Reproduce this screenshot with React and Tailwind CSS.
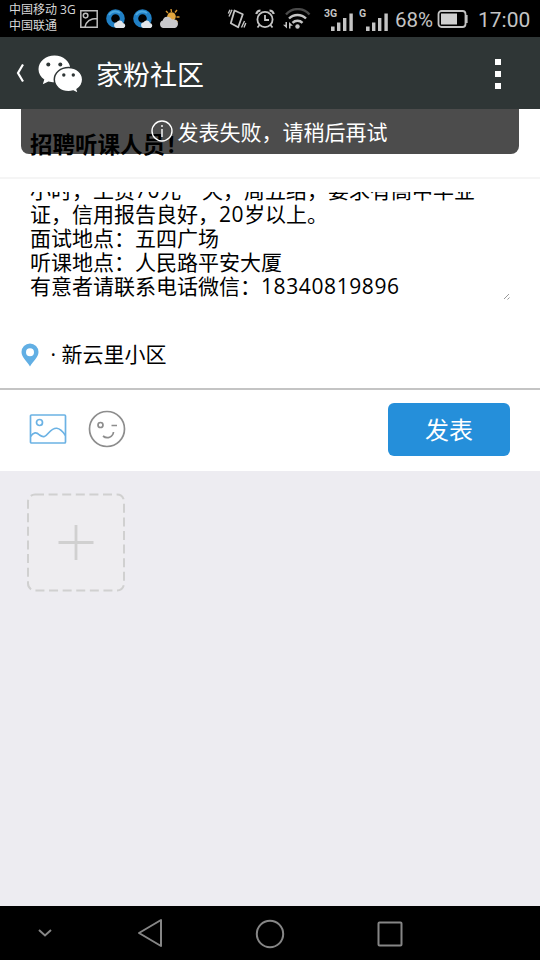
const POST_LINES = ['证，信用报告良好，', '面试地点：五四广场', '听课地点：人民路平安大厦', '有意者请联系电话微信：'];

const BrowserIcon = () => (
  <svg className="w-[20px] h-[20px] shrink-0" viewBox="0 0 20 20" fill="none">
    <circle cx="9.5" cy="9.5" r="6.8" stroke="#2080c6" strokeWidth="5" />
    <path d="M3 6a7.5 7.5 0 0 1 11-2" stroke="#4ba7df" strokeWidth="2" />
    <path d="M10 19a3 3 0 0 1 .6-5.8 3.6 3.6 0 0 1 6.4.8 2.6 2.6 0 0 1 .6 5z" fill="#e2e6ea" />
  </svg>
);

const SignalIcon = ({ label }) => (
  <svg className="-mt-[6px] w-[30px] h-[27px] shrink-0" viewBox="0 0 30 27" fill="#c4c4c4">
    <text x="0" y="12" fontSize="10.500" fontWeight="700" className="font-['Roboto',sans-serif]">{label}</text>
    <path d="M7 21.500h3.600V26H7zM13 17.500h3.400V26H13zM19 13h3.400v13H19zM25.400 8.500h3.400V26h-3.400z" />
  </svg>
);

const StatusBar = () => (
  <header className="flex h-[37px] shrink-0 items-center bg-black pl-[9px] text-[#c4c4c4]">
    <div className="-mt-[1px] w-[71px] shrink-0 whitespace-nowrap text-[12px] leading-[16px] text-[#d8d8d8]">
      <p>中国移动 3G</p>
      <p>中国联通</p>
    </div>
    <svg className="w-[18px] h-[18px] shrink-0" viewBox="0 0 18 18" fill="none" stroke="#bdbdbd" strokeWidth="1.5">
      <path d="M.8.8h16.400v16.400H.8zM5 17c1-5 5-8.500 12-8.500" />
      <circle cx="5.600" cy="5.600" r="2.300" />
    </svg>
    <div className="ml-[8px] flex gap-[7px]">
      <BrowserIcon />
      <BrowserIcon />
    </div>
    <svg className="ml-[6px] w-[22px] h-[20px] shrink-0" viewBox="0 0 22 20">
      <path d="M12 0l.5 3M18 1l-2 2.500M7 2l2 2M20.500 8h-3M18.500 13l-2-2" stroke="#d6962e" strokeWidth="1.400" />
      <circle cx="12.500" cy="7.500" r="4.300" fill="#e2a63e" />
      <path d="M4 19a3.900 3.900 0 0 1-.3-7.500 5 5 0 0 1 9.300-1 4.500 4.500 0 0 1 3 8.500z" fill="#c9c9cc" />
    </svg>
    <svg className="ml-[46px] w-[20px] h-[20px] shrink-0" viewBox="0 0 20 20" fill="none" stroke="#c4c4c4" strokeWidth="1.800">
      <path d="M7.500 1.500l8.300 3.800-4.600 13-7.400-4z" strokeLinejoin="round" />
      <path d="M5 .8L2 7.500M3 .8L1.300 4.500M14.500 18.500l3-6.500M17 18.500l1.800-4.500" strokeWidth="1.400" />
    </svg>
    <svg className="ml-[8px] w-[20px] h-[20px] shrink-0" viewBox="0 0 20 20" fill="none" stroke="#c4c4c4" strokeWidth="1.800">
      <circle cx="10" cy="10.500" r="7.600" />
      <path d="M10 6v5h4M4.500 16l-2 2.500M15.500 16l2 2.500" />
      <path d="M1.200 5C1.800 3 3.500 1.500 5.500 1.500M18.800 5c-.6-2-2.300-3.500-4.300-3.500" strokeWidth="2.200" />
    </svg>
    <svg className="ml-[8px] w-[28px] h-[22px] shrink-0" viewBox="0 0 28 22" fill="none" strokeWidth="2.400">
      <path d="M3 6.500a15.500 15.500 0 0 1 23.500 0" stroke="#4a4a4a" />
      <path d="M6 10.500a12 12 0 0 1 17 0M9.500 14.800a7 7 0 0 1 10 0" stroke="#c4c4c4" />
      <circle cx="14.500" cy="18.500" r="2.200" fill="#c4c4c4" />
      <g fill="#c4c4c4">
        <path d="M2.500 14h1.500v6.500L0 16.800h2.500zM6 14v6.500h1.500v-2.800H10z" />
      </g>
    </svg>
    <div className="ml-[13px] flex gap-[5px] pt-[5px]">
      <SignalIcon label="3G" />
      <SignalIcon label="G" />
    </div>
    <span className="ml-[6px] w-[42px] shrink-0 whitespace-nowrap font-['Roboto',sans-serif] text-[20.500px] leading-6 pt-[2px]">68%</span>
    <svg className="w-[32px] h-[20px] shrink-0" viewBox="0 0 32 20">
      <rect x="1.500" y="2" width="27" height="16" rx="3" fill="none" stroke="#c4c4c4" strokeWidth="1.800" />
      <rect x="4" y="4.500" width="16" height="11" fill="#d0d0d0" />
      <path d="M29 6h1.600v8H29z" fill="#c4c4c4" />
    </svg>
    <span className="ml-[9px] whitespace-nowrap font-['Roboto',sans-serif] text-[21px] leading-6 pt-[2px]">17:00</span>
  </header>
);

const TitleBar = () => (
  <div className="flex h-[72px] shrink-0 items-center bg-[#2f3636] pl-[16px] pr-[39px] text-white">
    <svg className="w-[8px] h-[20px] shrink-0" viewBox="0 0 8 20" fill="none" stroke="white" strokeWidth="2.200">
      <path d="M7 1.500L2 10l5 8.500" />
    </svg>
    <svg className="ml-[13px] mt-[2px] w-[46px] h-[38px] shrink-0" viewBox="0 0 46 38">
      <path fill="white" d="M17.500.5C8.800.5 1.500 6.500 1.500 14.200c0 4.300 2.200 7.800 5.800 10.300L5.800 29.200l5.600-2.800c2 .5 3.800.8 6.100.8 8.600 0 15.800-6 15.800-13.200S26.200.5 17.500.5z" />
      <path fill="white" stroke="#2f3636" strokeWidth="1.500" d="M31.500 12.500c-8 0-14.200 5.300-14.200 12.100s6.200 12.100 14.200 12.100c1.700 0 3.300-.3 4.800-.7l5.200 2.600-1.400-4.200c3.400-2.200 5.600-5.700 5.600-9.800 0-6.800-6.200-12.100-14.200-12.100z" />
      <g fill="#2f3636">
        <circle cx="11.300" cy="9.500" r="2" />
        <circle cx="23.300" cy="9.500" r="2" />
        <circle cx="26.800" cy="20" r="1.700" />
        <circle cx="36.300" cy="20" r="1.700" />
      </g>
    </svg>
    <h1 className="ml-[13px] mt-[4px] grow text-[27px] leading-9">家粉社区</h1>
    <div className="mt-[1px] flex flex-col gap-[6px]">
      <i className="size-[6px] bg-white" />
      <i className="size-[6px] bg-white" />
      <i className="size-[6px] bg-white" />
    </div>
  </div>
);

const Toast = () => (
  <div className="absolute inset-x-[21px] top-0 flex h-[45px] items-center justify-center gap-[5px] rounded-b-[8px] bg-black/70 pr-[2px] text-[21px] leading-6 text-white">
    <svg className="-mt-[2px] size-[22px]" viewBox="0 0 22 22" fill="none" stroke="white" strokeWidth="1.400">
      <circle cx="11" cy="11" r="10" />
      <path d="M11 9v8M11 5v2" />
    </svg>
    <span>发表失败，请稍后再试</span>
  </div>
);

const PostForm = () => (
  <div className="h-[279px] shrink-0">
    <div className="flex h-[70px] items-center border-b-2 border-[#f5f5f5] pl-[30px] pt-[3px] text-[22.500px] font-bold">
      招聘听课人员<span className="ml-[3px]">!</span>
    </div>
    <div className="ml-[30px] mr-[29px] mt-[13px] flex h-[110px] items-end overflow-hidden text-[21px] leading-6">
      <div className="grow whitespace-nowrap pb-[4px]">
        <p>小时，工资<span className="tracking-[.55px]">70</span>元一天，周五结，要求有高中毕业</p>
        <p>{POST_LINES[0]}<span className="tracking-[.55px]">20</span>岁以上。</p>
        <p>{POST_LINES[1]}</p>
        <p>{POST_LINES[2]}</p>
        <p>{POST_LINES[3]}<span className="tracking-[.6px]">18340819896</span></p>
      </div>
      <svg className="mb-[2px] mr-[1px] size-[7px] shrink-0" viewBox="0 0 7 7" stroke="#999" strokeWidth="1">
        <path d="M1 6l5-5M4.500 6.500l2-2" />
      </svg>
    </div>
    <div className="mt-[40px] flex h-[26px] items-center pl-[20.500px] text-[21px]">
      <svg className="w-[18px] h-[24px] shrink-0" viewBox="0 0 18 24">
        <path fill="#62afe4" fillRule="evenodd" d="M9 .5a8.500 8.500 0 0 0-8.500 8.600C.5 14.500 6 18.500 9 23.500c3-5 8.500-9 8.500-14.400A8.500 8.500 0 0 0 9 .5zm0 4.800a4 4 0 1 1 0 8 4 4 0 0 1 0-8z" />
      </svg>
      <span className="ml-[12px]">· 新云里小区</span>
    </div>
  </div>
);

const Toolbar = () => (
  <div className="flex h-[83px] shrink-0 items-center border-t-2 border-[#c4c4c4] pb-[2px] pl-[29px] pr-[30px]">
    <svg className="-mt-[1px] w-[38px] h-[30px]" viewBox="0 0 38 30" fill="none" stroke="#6bb2e4" strokeWidth="1.700">
      <rect x="1.500" y="1" width="35" height="28" rx="1" />
      <circle cx="10.500" cy="8.500" r="3" />
      <path d="M1.500 22.500c3-4.500 6-4.500 9-1.500 4 3 6 1.500 9-2 6-6.500 10.500-7 17 2.500" />
    </svg>
    <svg className="ml-[21px] -mt-[1px] size-[38px]" viewBox="0 0 38 38" fill="none" stroke="#8d8d8d" strokeWidth="1.700">
      <circle cx="19" cy="19" r="17.500" />
      <circle cx="12.500" cy="15" r="2.500" />
      <path d="M23.500 15.500h5.500M15 26c4 3.500 10 1 10.500-4" />
    </svg>
    <button className="ml-auto flex h-[53px] w-[122px] items-center justify-center rounded-[6px] bg-[#258fda] text-[24px] text-white">
      发表
    </button>
  </div>
);

const NavBar = () => (
  <nav className="flex h-[54px] shrink-0 items-center bg-black pl-[37px]">
    <svg className="w-[16px] h-[10px]" viewBox="0 0 16 10" fill="none" stroke="#868686" strokeWidth="2">
      <path d="M2 2l6 5.500L14 2" />
    </svg>
    <svg className="ml-[84px] w-[26px] h-[30px]" viewBox="0 0 26 30" fill="none" stroke="#868686" strokeWidth="2" strokeLinejoin="round">
      <path d="M24 2v26L2 15z" />
    </svg>
    <svg className="ml-[92px] mt-[1px] size-[30px]" viewBox="0 0 30 30" fill="none" stroke="#868686" strokeWidth="2">
      <circle cx="15" cy="15" r="13.200" />
    </svg>
    <svg className="ml-[92px] mt-[1px] size-[26px]" viewBox="0 0 26 26" fill="none" stroke="#868686" strokeWidth="2">
      <rect x="1.500" y="1.500" width="23" height="23" rx="1" />
    </svg>
  </nav>
);

export default function App() {
  return (
    <div className="flex h-[960px] w-[540px] flex-col overflow-hidden bg-white font-['Open_Sans','Noto_Sans_CJK_SC',sans-serif] text-black">
      <StatusBar />
      <TitleBar />
      <main className="relative flex grow flex-col">
        <PostForm />
        <Toast />
        <Toolbar />
        <section className="grow bg-[#edecf1] pl-[26px] pt-[22px]">
          <svg className="size-[99px]" viewBox="0 0 99 99" fill="none" stroke="#d0d0d0" strokeWidth="2">
            <rect x="2" y="1.500" width="96" height="96" rx="7" fill="#eeedf0" strokeDasharray="9 4.600" />
            <path d="M50 32v35M32.500 49.500h35" strokeWidth="2.800" />
          </svg>
        </section>
      </main>
      <NavBar />
    </div>
  );
}
